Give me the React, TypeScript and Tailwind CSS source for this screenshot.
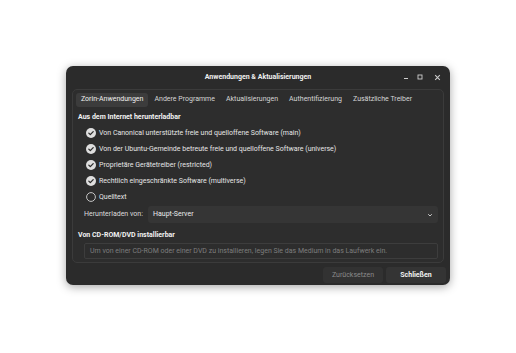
import React from "react";

const tabs = [
  "Zorin-Anwendungen",
  "Andere Programme",
  "Aktualisierungen",
  "Authentifizierung",
  "Zusätzliche Treiber",
];

const sources = [
  { label: "Von Canonical unterstützte freie und quelloffene Software (main)", on: true },
  { label: "Von der Ubuntu-Gemeinde betreute freie und quelloffene Software (universe)", on: true },
  { label: "Proprietäre Gerätetreiber (restricted)", on: true },
  { label: "Rechtlich eingeschränkte Software (multiverse)", on: true },
  { label: "Quelltext", on: false },
];

const Check = ({ on }: { on: boolean }) =>
  on ? (
    <svg width="10" height="10" viewBox="0 0 10 10" className="shrink-0">
      <circle cx="5" cy="5" r="5" fill="#dedede" />
      <path d="M2.8 5.1 L4.3 6.6 L7.2 3.6" fill="none" stroke="#2b2b2b" strokeWidth="1.3" strokeLinecap="round" strokeLinejoin="round" />
    </svg>
  ) : (
    <svg width="10" height="10" viewBox="0 0 10 10" className="shrink-0">
      <circle cx="5" cy="5" r="4.4" fill="none" stroke="#d4d4d4" strokeWidth="0.9" />
    </svg>
  );

export default function App() {
  return (
    <div
      className="w-[516px] h-[353px] bg-white pl-[66px] pt-[66px] whitespace-nowrap"
      style={{ fontFamily: "Roboto, 'Noto Sans', sans-serif" }}
    >
      <div className="w-[384px] h-[219px] rounded-[7px] bg-[#2b2b2b] shadow-[0_2px_10px_rgba(0,0,0,0.35)] flex flex-col text-[7px] text-[#e8e8e8]">
        {/* title bar */}
        <div className="relative h-[22px] flex items-center justify-center">
          <span className="font-bold text-[#f0f0f0]">Anwendungen &amp; Aktualisierungen</span>
          <div className="absolute right-[9px] top-0 h-full flex items-center gap-[8px]">
            <svg width="6" height="6" viewBox="0 0 6 6">
              <path d="M1 4.5 H5" stroke="#cfcfcf" strokeWidth="1" />
            </svg>
            <svg width="6" height="6" viewBox="0 0 6 6">
              <rect x="1" y="1" width="4" height="4" fill="none" stroke="#cfcfcf" strokeWidth="0.9" />
            </svg>
            <svg width="7" height="7" viewBox="0 0 6 6" className="ml-[3px]">
              <path d="M1 1 L5 5 M5 1 L1 5" stroke="#cfcfcf" strokeWidth="0.9" />
            </svg>
          </div>
        </div>

        {/* notebook */}
        <div className="mx-[6px] mt-[1px] h-[174px] rounded-[5px] border border-[#3b3b3b] bg-[#2d2d2d] flex flex-col">
          <div className="flex items-center gap-[1px] px-[3px] pt-[2px] h-[17px]">
            {tabs.map((t, i) => (
              <div
                key={t}
                className={
                  i === 0
                    ? "h-[14px] px-[5px] flex items-center rounded-[3px] bg-[#3c3c3c] text-[#f0f0f0]"
                    : "h-[14px] px-[5px] flex items-center text-[#d6d6d6]"
                }
              >
                {t}
              </div>
            ))}
          </div>

          <div className="px-[5px] pt-[5px] flex flex-col">
            <div className="font-bold text-[#f2f2f2] h-[10px] flex items-center">Aus dem Internet herunterladbar</div>
            <div className="flex flex-col pl-[8px] pt-[3px]">
              {sources.map((s) => (
                <div key={s.label} className="h-[16px] flex items-center gap-[3px]">
                  <Check on={s.on} />
                  <span className="text-[#e6e6e6]">{s.label}</span>
                </div>
              ))}
            </div>
            <div className="flex items-center pl-[6px] mt-[1px] h-[17px]">
              <span className="w-[64px] text-[#dcdcdc]">Herunterladen von:</span>
              <div className="flex-1 h-[17px] rounded-[3px] bg-[#353535] flex items-center justify-between px-[5px]">
                <span className="text-[#ececec]">Haupt-Server</span>
                <svg width="6" height="6" viewBox="0 0 6 6">
                  <path d="M1.2 2.2 L3 4 L4.8 2.2" fill="none" stroke="#d8d8d8" strokeWidth="0.9" />
                </svg>
              </div>
            </div>
            <div className="font-bold text-[#f2f2f2] mt-[7px] h-[10px] flex items-center">Von CD-ROM/DVD installierbar</div>
            <div className="ml-[6px] mt-[3px] h-[16px] rounded-[2px] border border-[#3d3d3d] flex items-center px-[5px] text-[#7d7d7d]">
              Um von einer CD-ROM oder einer DVD zu installieren, legen Sie das Medium in das Laufwerk ein.
            </div>
          </div>
        </div>

        {/* buttons */}
        <div className="flex justify-end gap-[3px] pr-[4px] mt-[4px]">
          <div className="w-[60px] h-[16px] rounded-[3px] bg-[#323232] flex items-center justify-center text-[#8a8a8a]">
            Zurücksetzen
          </div>
          <div className="w-[60px] h-[16px] rounded-[3px] bg-[#343434] flex items-center justify-center font-bold text-[#f2f2f2]">
            Schließen
          </div>
        </div>
      </div>
    </div>
  );
}
